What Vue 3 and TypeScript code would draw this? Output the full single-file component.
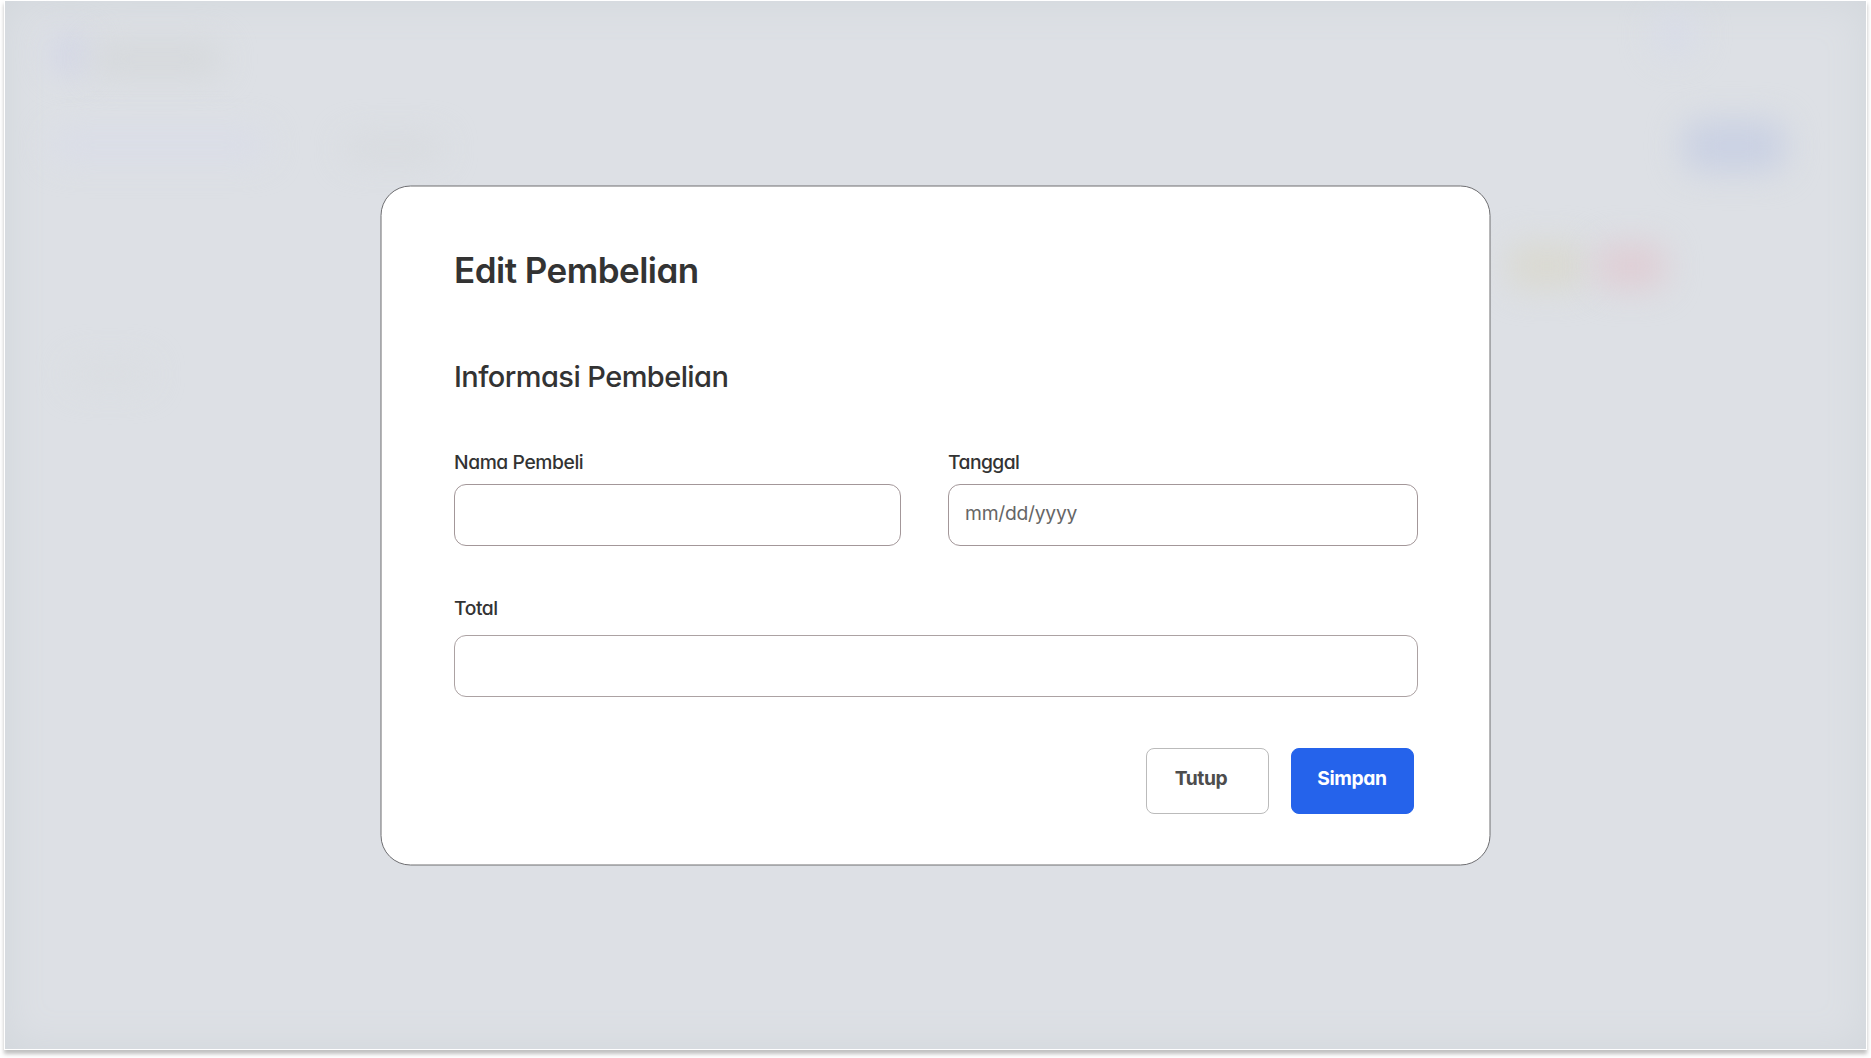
<script setup lang="ts">
import { ref } from 'vue'

interface Glow {
  x: number
  y: number
  w: number
  h: number
  color: string
}

const buyer = ref('')
const date = ref('')
const total = ref('')

// Soft shapes of the page behind the dialog
const glows: Glow[] = [
  { x: 52, y: 34, w: 36, h: 40, color: '#d2d5e6' },
  { x: 92, y: 42, w: 130, h: 34, color: '#d5d8db' },
  { x: 50, y: 130, w: 218, h: 30, color: '#dadde8' },
  { x: 345, y: 137, w: 98, h: 24, color: '#d7dade' },
  { x: 70, y: 362, w: 80, h: 24, color: '#dadde1' },
  { x: 1655, y: 12, w: 40, h: 44, color: '#d8dce8' },
  { x: 1682, y: 120, w: 104, h: 52, color: '#cad1e3' },
  { x: 1508, y: 243, w: 78, h: 46, color: '#dad9d1' },
  { x: 1596, y: 243, w: 70, h: 46, color: '#dfced5' },
]
</script>

<template>
  <main class="page">
    <div class="backdrop">
      <i
        v-for="(g, i) in glows"
        :key="i"
        class="glow"
        :style="{ left: g.x - 5 + 'px', top: g.y - 1 + 'px', width: g.w + 'px', height: g.h + 'px', background: g.color }"
      />
      <form class="dialog" @submit.prevent>
        <h1>Edit Pembelian</h1>
        <h2>Informasi Pembelian</h2>
        <div class="row">
          <label class="field buyer">
            <span class="name">Nama Pembeli</span>
            <input v-model="buyer" type="text" />
          </label>
          <label class="field date">
            <span class="name">Tanggal</span>
            <input v-model="date" type="text" placeholder="mm/dd/yyyy" />
          </label>
        </div>
        <label class="field total">
          <span class="name">Total</span>
          <input v-model="total" type="text" />
        </label>
        <div class="actions">
          <button type="button" class="close">Tutup</button>
          <button type="submit" class="save">Simpan</button>
        </div>
      </form>
    </div>
  </main>
</template>

<style>
body {
  margin: 0;
  background: #fff;
  overflow: hidden;
}
</style>

<style scoped>
.page {
  box-sizing: border-box;
  height: 1058px;
  padding: 0 4px 8px;
  overflow: hidden;
  font-family: Inter, Lato, sans-serif;
  font-feature-settings: 'cv11' 1;
  color: #333;
}
.backdrop {
  position: relative;
  z-index: 0;
  box-sizing: border-box;
  width: 1863px;
  height: 1050px;
  padding: 184px 0 0 375px;
  border: 1px solid #fff;
  background: #dde0e5;
  background-clip: padding-box;
  box-shadow: 0 4px 4px rgba(0, 0, 0, 0.25), inset 0 0 40px #d1d6db;
}
.glow {
  position: absolute;
  border-radius: 16px;
  filter: blur(16px);
}
.dialog {
  position: relative;
  z-index: 1;
  box-sizing: border-box;
  width: 1111px;
  height: 681px;
  padding: 1px 0 0 74px;
}
.dialog::before {
  content: '';
  position: absolute;
  z-index: -1;
  inset: 0;
  box-sizing: border-box;
  width: 1110px;
  height: 680px;
  border: 1px solid #6e6e71;
  border-radius: 30px;
  background: #fff;
  transform: translate(0.5px, 0.5px);
}
h1,
h2 {
  margin: 0;
  white-space: nowrap;
}
h1 {
  padding-top: 62px;
  height: 44px;
  font-size: 35px;
  line-height: 44px;
  font-weight: 600;
  letter-spacing: -0.52px;
}
h2 {
  padding-top: 65px;
  height: 40px;
  font-size: 29px;
  line-height: 40px;
  font-weight: 500;
  letter-spacing: -0.57px;
}
.row {
  display: flex;
  gap: 47px;
  padding-top: 52px;
}
.field {
  display: flex;
  flex-direction: column;
}
.name {
  height: 35px;
  font-size: 19.3px;
  line-height: 26px;
  font-weight: 500;
  white-space: nowrap;
  letter-spacing: -0.42px;
}
.date .name {
  letter-spacing: -0.55px;
}
.field input {
  box-sizing: border-box;
  height: 62px;
  padding: 0 16px 4px;
  border: 1px solid #a39799;
  border-radius: 12px;
  outline: 0;
  background: #fff;
  color: #333;
  font: inherit;
  font-size: 19.3px;
  font-feature-settings: inherit;
  letter-spacing: -0.25px;
}
.field input::placeholder {
  color: #666;
  opacity: 1;
}
.buyer {
  width: 447px;
}
.date {
  width: 470px;
}
.total {
  width: 964px;
  padding-top: 49px;
}
.total .name {
  height: 40px;
}
.total input {
  border-color: #aca2a3;
}
.actions {
  display: flex;
  justify-content: flex-end;
  gap: 22px;
  width: 960px;
  padding-top: 51px;
}
.actions button {
  box-sizing: border-box;
  width: 123px;
  height: 66px;
  padding: 0 0 6px;
  border: 1px solid #bbb;
  border-radius: 8px;
  background: #fff;
  color: #4d4d4d;
  font: 700 19.3px/26px Inter, Lato, sans-serif;
  font-feature-settings: 'cv11' 1;
  letter-spacing: -0.4px;
}
.actions .close {
  padding-right: 13px;
}
.actions .save {
  padding-right: 1px;
  border-color: #2563eb;
  background: #2563eb;
  color: #fff;
}
</style>
